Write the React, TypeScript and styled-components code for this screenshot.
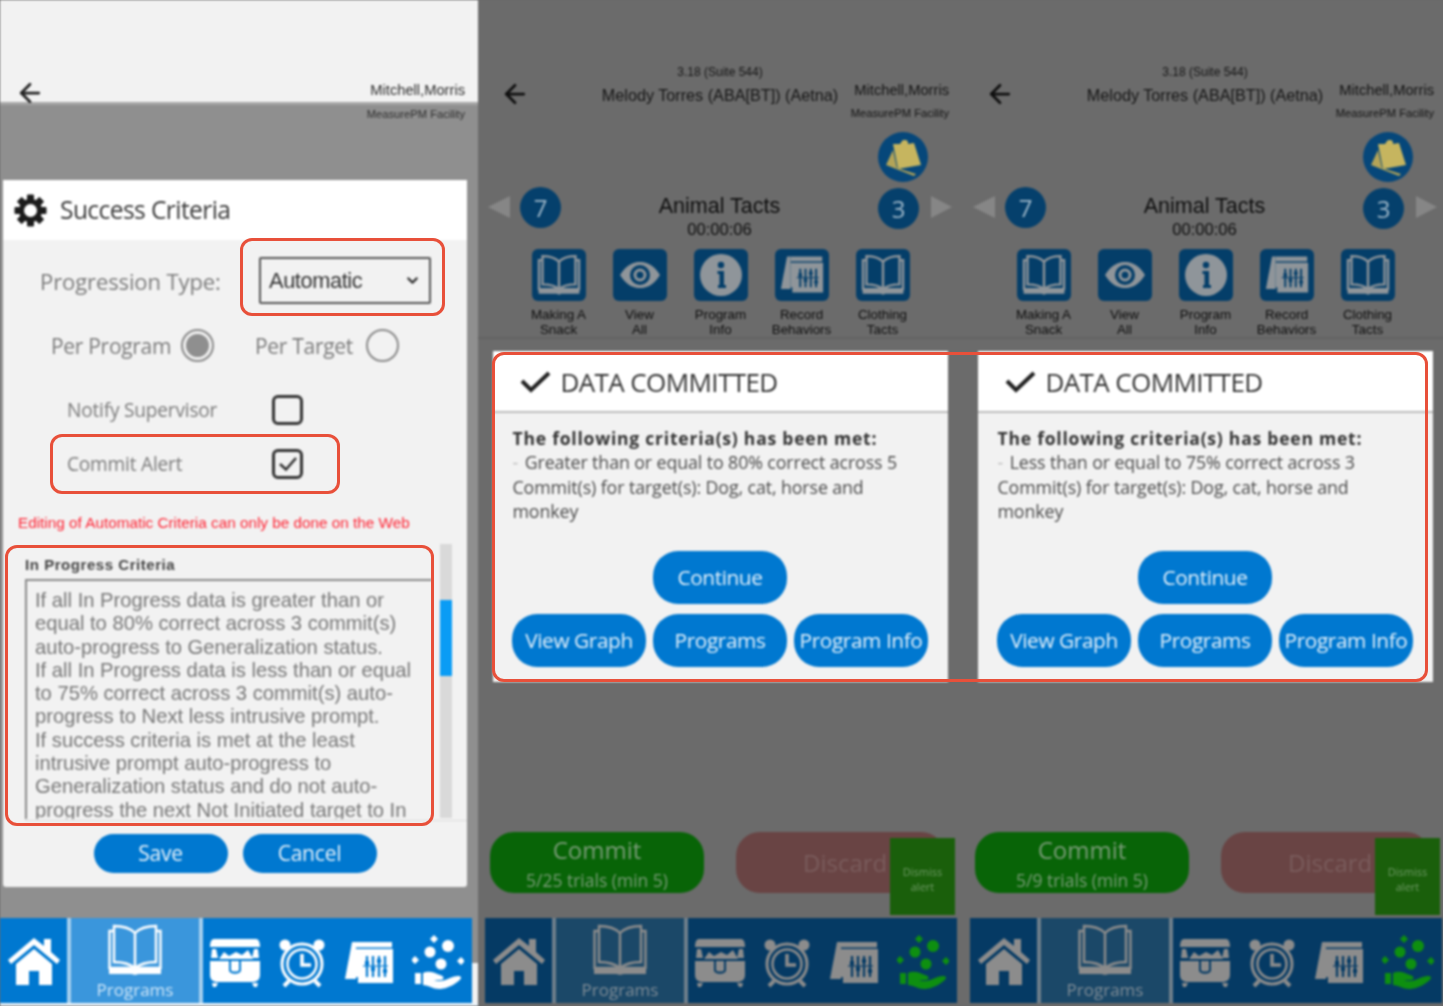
import React from "react";
import styled, { createGlobalStyle } from "styled-components";
import { ArrowLeft, ChevronDown } from "lucide-react";

const BLUE = "#0078d0";
const NAVY = "#053a64";
const SANS = `"Open Sans", "Noto Sans", sans-serif`;
const ARIAL = `"Liberation Sans", Arial, sans-serif`;

const Global = createGlobalStyle`
  html, body { margin: 0; padding: 0; background: #6b6b6b; overflow: hidden; }
  * { box-sizing: border-box; }
`;

const Stage = styled.div`
  position: relative;
  width: 1443px;
  height: 1006px;
  overflow: hidden;
`;
const Panels = styled.div`
  display: flex;
  width: 1448px;
  height: 1006px;
  filter: blur(0.85px);
`;

/* ---------- shared ---------- */
const UserName = styled.div`
  font: 14.7px/20px ${ARIAL};
  color: #2e2e2e;
  text-align: right;
  white-space: nowrap;
`;
const Facility = styled.div`
  font: 11.2px/18px ${ARIAL};
  color: #2e2e2e;
  text-align: right;
  white-space: nowrap;
`;

const NavBar = styled.div<{ $dim?: boolean }>`
  display: flex;
  gap: 4px;
  width: 472px;
  height: 85px;
  background: ${(p) => (p.$dim ? "#6f7f8b" : "#a6cfee")};
  flex-shrink: 0;
  position: relative;
  z-index: 2;
  --ink: ${(p) => (p.$dim ? NAVY : BLUE)};
  --panel: ${(p) => (p.$dim ? NAVY : BLUE)};
  --active: ${(p) => (p.$dim ? "#1b4868" : "#3a96dc")};
  --glyph: ${(p) => (p.$dim ? "#8c8c8c" : "#ffffff")};
  --label: ${(p) => (p.$dim ? "#7f8c96" : "#cfe6f8")};
  --coin: ${(p) => (p.$dim ? "#0e8f10" : "#ffffff")};
`;
const HomeCell = styled.div`
  width: 67px;
  background: var(--panel);
  display: flex;
  align-items: center;
  justify-content: center;
  color: var(--glyph);
`;
const ProgramsCell = styled.div`
  width: 128px;
  background: var(--active);
  display: flex;
  flex-direction: column;
  align-items: center;
  padding-top: 6px;
  color: var(--glyph);
`;
const NavLabel = styled.div`
  font: 17px/22px ${SANS};
  color: var(--label);
  margin-top: 3px;
`;
const ToolCell = styled.div`
  flex: 1;
  background: var(--panel);
  display: grid;
  grid-template-columns: repeat(4, 1fr);
  align-items: center;
  justify-items: center;
  padding-top: 5px;
  color: var(--glyph);
`;
const ToolShift = styled.div`
  display: flex;
  margin-left: -4px;
`;
const CoinSlot = styled.span`
  display: flex;
  color: var(--coin);
`;

const HomeIcon = () => (
  <svg width="56" height="52" viewBox="0 0 56 52" fill="currentColor">
    <path d="M2 25 L28 3 L38 11 V4 H45 V17 L54 25 L51 29 L28 10 L5 29 Z" />
    <path d="M10 29 L28 14 L46 29 V50 H33 V36 H23 V50 H10 Z" />
  </svg>
);
const BookIcon = ({ w = 56, h = 52, sw = 2.4 }: { w?: number; h?: number; sw?: number }) => (
  <svg width={w} height={h} viewBox="0 0 56 52" fill="none" stroke="currentColor" strokeWidth={sw}>
    <path d="M28 9 C23 4 15 2 7 2 V38 C15 38 23 40 28 44 C33 40 41 38 49 38 V2 C41 2 33 4 28 9 V44" />
    <path d="M7 7 H2.5 V44 H24" />
    <path d="M49 7 H53.5 V44 H32" />
    <path d="M2 43 H24 C26 43 27 45 28 45 C29 45 30 43 32 43 H54 V50 H32 C30 50 29 51 28 51 C27 51 26 50 24 50 H2 Z" fill="currentColor" stroke="none" />
  </svg>
);
const ChestIcon = () => (
  <svg width="52" height="50" viewBox="0 0 52 50" fill="currentColor">
    <path d="M5 1 H47 C50 1 51 5 51 9 H1 C1 5 2 1 5 1 Z" />
    <path d="M3 11 H7 L9 20 H2 Z M49 11 H45 L43 20 H50 Z" />
    <path d="M10 21 L15 14 L20 18 L27 14 L33 17 L39 12 L44 21 Z" />
    <path d="M1 23 H20 V32 C20 37 32 37 32 32 V23 H51 V37 C51 42 47 44 44 44 H8 C5 44 1 42 1 37 Z" />
    <path d="M22 23 H30 V32 C30 34 22 34 22 32 Z" />
    <path d="M3 45 H9 L7 49 H4 Z M43 45 H49 L48 49 H45 Z" />
  </svg>
);
const ClockIcon = () => (
  <svg width="48" height="50" viewBox="0 0 48 50" fill="none" stroke="currentColor">
    <circle cx="24" cy="26" r="20" strokeWidth="3" />
    <circle cx="24" cy="26" r="14.5" strokeWidth="2.5" />
    <path d="M24 16 V27 H33" strokeWidth="3.5" />
    <circle cx="7" cy="7" r="5.5" fill="currentColor" stroke="none" />
    <circle cx="41" cy="7" r="5.5" fill="currentColor" stroke="none" />
    <path d="M11 43 L6 48 M37 43 L42 48" strokeWidth="4" />
  </svg>
);
const CalendarIcon = ({ w = 50, h = 44 }: { w?: number; h?: number }) => (
  <svg width={w} height={h} viewBox="0 0 50 44" fill="currentColor">
    <path d="M8 1 H12 V38 H1 Z" />
    <rect x="12" y="1" width="36" height="5.5" />
    <path d="M12 8 H49 V42 H14 V36 L12 36 Z" />
    <g stroke="var(--ink)" strokeWidth="2.2">
      <path d="M19 25 H44" strokeWidth="1.2" />
      <path d="M23 15 V36 M29 15 V36 M35 15 V36 M41 15 V36" />
      <path d="M21 22 H25 M27 28 H31 M33 20 H37 M39 30 H43" strokeWidth="4" />
    </g>
  </svg>
);
const HandIcon = () => (
  <svg width="52" height="56" viewBox="0 0 52 56" fill="currentColor">
    <path d="M21 0 L25 4 L21 8 L17 4 Z M2 21 L6 25 L2 29 L-2 25 Z M48 22 L52 26 L48 30 L44 26 Z" transform="translate(1 0)" />
    <circle cx="36" cy="11" r="6" />
    <circle cx="18" cy="17" r="5.5" />
    <circle cx="29" cy="29" r="5.5" />
    <rect x="3" y="38" width="6" height="11" />
    <path d="M11 38 C17 35 23 38 28 40 C32 41 33 44 29 45 L22 45 C27 47 32 46 38 43 C43 41 49 40 49 43 C49 45 38 54 27 54 C21 54 16 50 11 50 Z" />
  </svg>
);
const GearIcon = () => (
  <svg width="33" height="33" viewBox="0 0 33 33" fill="currentColor">
    {[0, 45, 90, 135, 180, 225, 270, 315].map((a) => (
      <rect key={a} x="13" y="0.5" width="7" height="7" rx="1" transform={`rotate(${a} 16.5 16.5)`} />
    ))}
    <circle cx="16.5" cy="16.5" r="9" fill="none" stroke="currentColor" strokeWidth="5" />
  </svg>
);

const Nav = ({ dim }: { dim?: boolean }) => (
  <NavBar $dim={dim}>
    <HomeCell>
      <HomeIcon />
    </HomeCell>
    <ProgramsCell>
      <BookIcon />
      <NavLabel>Programs</NavLabel>
    </ProgramsCell>
    <ToolCell>
      <ToolShift>
        <ChestIcon />
      </ToolShift>
      <ToolShift>
        <ClockIcon />
      </ToolShift>
      <ToolShift>
        <CalendarIcon />
      </ToolShift>
      <CoinSlot>
        <HandIcon />
      </CoinSlot>
    </ToolCell>
  </NavBar>
);

/* ---------- panel 1 ---------- */
const FirstPanel = styled.div`
  width: 478px;
  height: 1006px;
  flex-shrink: 0;
  display: flex;
  flex-direction: column;
  background: #8f8f8f;
`;
const TopBand = styled.div`
  height: 105px;
  flex-shrink: 0;
  background: #f2f2f2;
  border-bottom: 3px solid #a5a5a5;
  display: flex;
  align-items: flex-end;
  justify-content: space-between;
  padding: 0 13px 0 15px;
  color: #222;
  svg { margin-bottom: -6px; }
`;
const TopName = styled(UserName)`
  margin-bottom: 2px;
`;
const FacilityBar = styled.div`
  height: 18px;
  padding-right: 13px;
  margin-bottom: 57px;
`;
const Card = styled.div`
  width: 464px;
  height: 707px;
  margin-left: 3px;
  margin-bottom: 31px;
  background: #f2f2f2;
  border-radius: 3px;
  flex-shrink: 0;
`;
const CardTitleBar = styled.div`
  height: 60px;
  background: #fff;
  display: flex;
  align-items: center;
  padding-left: 11px;
  gap: 13px;
  color: #1c1c1c;
`;
const CardTitle = styled.div`
  font: 24.6px/30px ${SANS};
  color: #3a3a3a;
  letter-spacing: -0.6px;
`;
const TypeRow = styled.div`
  display: flex;
  align-items: center;
  height: 47px;
  margin-top: 17px;
  padding-left: 37px;
`;
const FieldLabel = styled.div`
  width: 219px;
  font: 22px/28px ${SANS};
  color: #7a7a7a;
  letter-spacing: -0.1px;
  white-space: nowrap;
`;
const SelectBox = styled.div`
  width: 172px;
  height: 47px;
  border: 2px solid #555;
  border-radius: 2px;
  display: flex;
  align-items: center;
  justify-content: space-between;
  padding: 0 8px;
  font: 21.8px/24px ${ARIAL};
  color: #333;
  letter-spacing: -0.4px;
`;
const RadioRow = styled.div`
  display: grid;
  grid-template-columns: 130px 33px 41px 111px 33px;
  align-items: center;
  margin-top: 25px;
  padding-left: 48px;
`;
const OptionText = styled.div`
  font: 21px/28px ${SANS};
  color: #7a7a7a;
  letter-spacing: -0.3px;
  white-space: nowrap;
`;
const Radio = styled.div<{ $on?: boolean }>`
  width: 33px;
  height: 33px;
  border-radius: 50%;
  border: 2px solid #8a8a8a;
  background: #f2f2f2;
  display: flex;
  align-items: center;
  justify-content: center;
  &::after {
    content: "";
    width: 23px;
    height: 23px;
    border-radius: 50%;
    background: ${(p) => (p.$on ? "#8f8f8f" : "transparent")};
  }
`;
const CheckRow = styled.div<{ $top: number }>`
  display: grid;
  grid-template-columns: 205px 30px;
  align-items: center;
  height: 30px;
  margin-top: ${(p) => p.$top}px;
  padding-left: 64px;
`;
const CheckLabel = styled.div`
  font: 19.1px/24px ${SANS};
  color: #7a7a7a;
  letter-spacing: -0.2px;
  white-space: nowrap;
`;
const CheckBox = styled.div`
  width: 31px;
  height: 30px;
  border: 3px solid #333;
  border-radius: 6px;
  display: flex;
  align-items: center;
  justify-content: center;
  color: #333;
`;
const Warning = styled.div`
  margin-top: 35px;
  padding-left: 15px;
  font: 15.3px/18px ${ARIAL};
  color: #ff2535;
  white-space: nowrap;
`;
const CriteriaSection = styled.div`
  display: flex;
  gap: 8px;
  height: 275px;
  margin-top: 12px;
  padding-left: 22px;
`;
const CriteriaColumn = styled.div`
  width: 407px;
  padding-top: 12px;
  display: flex;
  flex-direction: column;
`;
const CriteriaLabel = styled.div`
  font: bold 15px/18px ${ARIAL};
  color: #444;
  height: 23px;
  letter-spacing: 0.55px;
  white-space: nowrap;
`;
const CriteriaBox = styled.div`
  height: 240px;
  border-top: 2px solid #8a8a8a;
  border-left: 2px solid #8a8a8a;
  padding: 8px 0 0 8px;
  overflow: hidden;
  font: 20.2px/23.3px ${ARIAL};
  color: #777;
  white-space: pre-line;
`;
const Track = styled.div`
  width: 12px;
  height: 274px;
  background: #d9d9d9;
  padding-top: 56px;
`;
const Thumb = styled.div`
  height: 76px;
  background: #0a9cf5;
`;
const CardRule = styled.div`
  height: 1px;
  margin: 1px 0 0 22px;
  background: #dcdcdc;
`;
const CardButtons = styled.div`
  display: flex;
  justify-content: center;
  gap: 15px;
  margin-top: 13px;
`;
const SmallPill = styled.div`
  width: 134px;
  height: 39px;
  border-radius: 20px;
  background: ${BLUE};
  color: #e8f3fb;
  font: 21px/38px ${SANS};
  text-align: center;
  letter-spacing: -0.2px;
`;
const NavRow = styled.div`
  display: flex;
  align-items: flex-end;
  height: 85px;
  flex-shrink: 0;
`;
const EdgePiece = styled.div`
  flex: 1;
  height: 40px;
  background: #f2f2f2;
`;
const BottomStrip = styled.div`
  height: 3px;
  background: #e8f1f8;
`;

/* ---------- panels 2 and 3 ---------- */
const DimPanel = styled.div`
  position: relative;
  width: 485px;
  height: 1006px;
  flex-shrink: 0;
  background: #f2f2f2;
  display: flex;
  flex-direction: column;
`;
const Scrim = styled.div`
  position: absolute;
  inset: 0;
  background: rgba(0, 0, 0, 0.558);
  z-index: 1;
`;
const Header = styled.div`
  display: grid;
  grid-template-columns: 100px 284px 87px;
  height: 122px;
  padding-top: 62px;
  color: #222;
`;
const BackSlot = styled.div`
  padding: 17px 0 0 22px;
`;
const HeaderMiddle = styled.div`
  text-align: center;
`;
const VersionText = styled.div`
  font: 12px/20px ${ARIAL};
  color: #333;
`;
const PatientName = styled.div`
  font: 16.2px/20px ${ARIAL};
  color: #333;
  margin-top: 3px;
  white-space: nowrap;
`;
const HeaderRight = styled.div`
  padding-top: 18px;
  display: flex;
  flex-direction: column;
  align-items: flex-end;
`;
const HeaderFacility = styled(Facility)`
  margin-top: 4px;
`;
const NoteRow = styled.div`
  display: flex;
  justify-content: flex-end;
  padding-right: 35px;
  margin-top: 10px;
  position: relative;
  z-index: 2;
`;
const NoteButton = styled.div`
  width: 50px;
  height: 50px;
  border-radius: 50%;
  background: #06477a;
  display: flex;
  align-items: center;
  justify-content: center;
`;
const ProgramRow = styled.div`
  display: flex;
  align-items: flex-start;
  height: 63px;
  margin-top: 4px;
  padding: 0 11px 0 10px;
`;
const Tri = styled.div<{ $right?: boolean }>`
  width: 0;
  height: 0;
  margin-top: 10px;
  position: relative;
  z-index: 2;
  border-top: 11px solid transparent;
  border-bottom: 11px solid transparent;
  ${(p) =>
    p.$right
      ? "border-left: 21px solid #868686; margin-left: 12px;"
      : "border-right: 22px solid #868686; margin-right: 10px;"}
`;
const CountBadge = styled.div<{ $down?: boolean }>`
  width: 41px;
  height: 41px;
  margin-top: ${(p) => (p.$down ? 2 : 1)}px;
  border-radius: 50%;
  background: #05406c;
  color: #9db6c8;
  font: 24px/41px ${SANS};
  text-align: center;
  flex-shrink: 0;
  position: relative;
  z-index: 2;
`;
const ProgramCenter = styled.div`
  flex: 1;
  text-align: center;
`;
const ProgramName = styled.div`
  font: 21.5px/28px ${ARIAL};
  color: #222;
  margin-top: 6px;
`;
const Timer = styled.div`
  font: 16.6px/18px ${ARIAL};
  color: #222;
  margin-top: 1px;
`;
const TileRow = styled.div`
  display: flex;
  padding-left: 40px;
  height: 90px;
  border-bottom: 2px solid #dedede;
`;
const TileCol = styled.div`
  width: 81px;
  display: flex;
  flex-direction: column;
  align-items: center;
`;
const Tile = styled.div`
  width: 54px;
  height: 54px;
  border-radius: 6px;
  background: #043e69;
  color: #8f959a;
  --ink: #043e69;
  display: flex;
  align-items: center;
  justify-content: center;
  position: relative;
  z-index: 2;
`;
const TileText = styled.div`
  font: 13.4px/15px ${ARIAL};
  color: #222;
  text-align: center;
  margin-top: 6px;
  white-space: pre-line;
`;
const Spacer = styled.div`
  flex: 1;
`;
const ActionRow = styled.div`
  display: flex;
  gap: 32px;
  padding-left: 12px;
  height: 61px;
  margin-bottom: 25px;
  position: relative;
  z-index: 2;
`;
const CommitButton = styled.div`
  width: 214px;
  border-radius: 24px;
  background: #086407;
  color: #7a9c78;
  text-align: center;
  padding-top: 2px;
`;
const CommitTitle = styled.div`
  font: 24px/32px ${SANS};
`;
const CommitSub = styled.div`
  font: 17.5px/24px ${SANS};
  margin-top: 2px;
`;
const DiscardButton = styled.div`
  width: 209px;
  border-radius: 24px;
  background: #694444;
  color: #7a5c5c;
  font: 24px/61px ${SANS};
  padding-left: 67px;
`;
const Dismiss = styled.div`
  position: absolute;
  left: 412px;
  top: 838px;
  width: 65px;
  height: 77px;
  background: #1a5f0b;
  color: #6f9a66;
  z-index: 3;
  font: 11px/15px ${SANS};
  text-align: center;
  padding-top: 26px;
`;
const NavSlot = styled.div`
  padding-left: 7px;
  height: 88px;
`;
const Alert = styled.div`
  position: absolute;
  left: 14.5px;
  top: 351px;
  width: 455px;
  height: 331px;
  background: #f2f2f2;
  z-index: 3;
`;
const AlertHead = styled.div`
  height: 62px;
  background: #fff;
  border-bottom: 2px solid #bdbdbd;
  display: flex;
  align-items: center;
  gap: 10px;
  padding: 1px 0 0 27px;
  color: #222;
`;
const AlertTitle = styled.div`
  font: 26px/32px ${SANS};
  color: #333;
  letter-spacing: -0.6px;
`;
const AlertBody = styled.div`
  padding: 13px 0 0 20px;
  height: 109px;
`;
const AlertLead = styled.div`
  font: 700 17.5px/24.3px ${SANS};
  color: #333;
  letter-spacing: 0.78px;
  white-space: nowrap;
`;
const AlertLine = styled.div`
  font: 17.8px/24.3px ${SANS};
  color: #4a4a4a;
  letter-spacing: -0.1px;
  white-space: nowrap;
`;
const Dash = styled.span`
  color: #bbb;
  margin-right: 2px;
`;
const ButtonStack = styled.div`
  display: flex;
  flex-direction: column;
  align-items: center;
  gap: 10px;
  margin-top: 29px;
`;
const ButtonRow = styled.div`
  display: flex;
  gap: 7px;
`;
const Pill = styled.div`
  width: 134px;
  height: 53px;
  border-radius: 25px;
  background: ${BLUE};
  color: #e4f1fb;
  font: 20.8px/53px ${SANS};
  text-align: center;
  letter-spacing: -0.4px;
  white-space: nowrap;
`;

/* ---------- annotations ---------- */
const Mark = styled.div<{ $x: number; $y: number; $w: number; $h: number }>`
  position: absolute;
  left: ${(p) => p.$x}px;
  top: ${(p) => p.$y}px;
  width: ${(p) => p.$w}px;
  height: ${(p) => p.$h}px;
  border: 3.5px solid #e8503a;
  border-radius: 12px;
  z-index: 5;
`;

const NoteIcon = () => (
  <svg width="38" height="38" viewBox="0 0 38 38" fill="#c6b55f">
    <path d="M2 27 L9 12 L13 30 L32 36 L30 38 Z" fill="#b3a458" />
    <path d="M9 6 L16 6 L18 3 C20 1 23 2 24 6 L30 5 L37 27 L14 31 Z" />
    <circle cx="21" cy="5" r="3" fill="#c6b55f" />
  </svg>
);
const EyeIcon = () => (
  <svg width="42" height="28" viewBox="0 0 42 28">
    <path d="M1 14 C8 3 15 1 21 1 C27 1 34 3 41 14 C34 25 27 27 21 27 C15 27 8 25 1 14 Z" fill="currentColor" />
    <circle cx="21" cy="14" r="10" fill="var(--ink)" />
    <circle cx="21" cy="14" r="6.5" fill="currentColor" />
    <circle cx="21" cy="14" r="3.5" fill="var(--ink)" />
  </svg>
);
const InfoIcon = () => (
  <svg width="44" height="44" viewBox="0 0 44 44">
    <circle cx="22" cy="22" r="21" fill="currentColor" />
    <circle cx="22" cy="12" r="3.2" fill="var(--ink)" />
    <path d="M18.5 18 H25 V32 H27 V35 H19 V32 H20.5 V21 H18.5 Z" fill="var(--ink)" />
  </svg>
);
const TinyCheck = () => (
  <svg width="20" height="16" viewBox="0 0 20 16" fill="none" stroke="currentColor" strokeWidth="2.6">
    <path d="M2 8 L8 13.5 L18 2" />
  </svg>
);
const BigCheck = () => (
  <svg width="31" height="22" viewBox="0 0 31 22" fill="none" stroke="currentColor" strokeWidth="4">
    <path d="M2 10 L11 19 L29 2" />
  </svg>
);

const criteria = `If all In Progress data is greater than or
equal to 80% correct across 3 commit(s)
auto-progress to Generalization status.
If all In Progress data is less than or equal
to 75% correct across 3 commit(s) auto-
progress to Next less intrusive prompt.
If success criteria is met at the least
intrusive prompt auto-progress to
Generalization status and do not auto-
progress the next Not Initiated target to In`;

const First = () => (
  <FirstPanel>
    <TopBand>
      <ArrowLeft size={30} strokeWidth={2.2} />
      <TopName>Mitchell,Morris</TopName>
    </TopBand>
    <FacilityBar>
      <Facility>MeasurePM Facility</Facility>
    </FacilityBar>
    <Card>
      <CardTitleBar>
        <GearIcon />
        <CardTitle>Success Criteria</CardTitle>
      </CardTitleBar>
      <TypeRow>
        <FieldLabel>Progression Type:</FieldLabel>
        <SelectBox>
          Automatic
          <ChevronDown size={17} strokeWidth={3} />
        </SelectBox>
      </TypeRow>
      <RadioRow>
        <OptionText>Per Program</OptionText>
        <Radio $on />
        <span />
        <OptionText>Per Target</OptionText>
        <Radio />
      </RadioRow>
      <CheckRow $top={33}>
        <CheckLabel>Notify Supervisor</CheckLabel>
        <CheckBox />
      </CheckRow>
      <CheckRow $top={24}>
        <CheckLabel>Commit Alert</CheckLabel>
        <CheckBox>
          <TinyCheck />
        </CheckBox>
      </CheckRow>
      <Warning>Editing of Automatic Criteria can only be done on the Web</Warning>
      <CriteriaSection>
        <CriteriaColumn>
          <CriteriaLabel>In Progress Criteria</CriteriaLabel>
          <CriteriaBox>{criteria}</CriteriaBox>
        </CriteriaColumn>
        <Track>
          <Thumb />
        </Track>
      </CriteriaSection>
      <CardRule />
      <CardButtons>
        <SmallPill>Save</SmallPill>
        <SmallPill>Cancel</SmallPill>
      </CardButtons>
    </Card>
    <NavRow>
      <Nav />
      <EdgePiece />
    </NavRow>
    <BottomStrip />
  </FirstPanel>
);

const Session = ({ rule, trials }: { rule: string; trials: string }) => (
  <DimPanel>
    <Header>
      <BackSlot>
        <ArrowLeft size={30} strokeWidth={2.2} />
      </BackSlot>
      <HeaderMiddle>
        <VersionText>3.18 (Suite 544)</VersionText>
        <PatientName>Melody Torres (ABA[BT]) (Aetna)</PatientName>
      </HeaderMiddle>
      <HeaderRight>
        <UserName>Mitchell,Morris</UserName>
        <HeaderFacility>MeasurePM Facility</HeaderFacility>
      </HeaderRight>
    </Header>
    <NoteRow>
      <NoteButton>
        <NoteIcon />
      </NoteButton>
    </NoteRow>
    <ProgramRow>
      <Tri />
      <CountBadge>7</CountBadge>
      <ProgramCenter>
        <ProgramName>Animal Tacts</ProgramName>
        <Timer>00:00:06</Timer>
      </ProgramCenter>
      <CountBadge $down>3</CountBadge>
      <Tri $right />
    </ProgramRow>
    <TileRow>
      <TileCol>
        <Tile>
          <BookIcon w={44} h={42} sw={3} />
        </Tile>
        <TileText>{"Making A\nSnack"}</TileText>
      </TileCol>
      <TileCol>
        <Tile>
          <EyeIcon />
        </Tile>
        <TileText>{"View\nAll"}</TileText>
      </TileCol>
      <TileCol>
        <Tile>
          <InfoIcon />
        </Tile>
        <TileText>{"Program\nInfo"}</TileText>
      </TileCol>
      <TileCol>
        <Tile>
          <CalendarIcon w={44} h={44} />
        </Tile>
        <TileText>{"Record\nBehaviors"}</TileText>
      </TileCol>
      <TileCol>
        <Tile>
          <BookIcon w={44} h={42} sw={3} />
        </Tile>
        <TileText>{"Clothing\nTacts"}</TileText>
      </TileCol>
    </TileRow>
    <Spacer />
    <ActionRow>
      <CommitButton>
        <CommitTitle>Commit</CommitTitle>
        <CommitSub>{trials}</CommitSub>
      </CommitButton>
      <DiscardButton>Discard</DiscardButton>
    </ActionRow>
    <NavSlot>
      <Nav dim />
    </NavSlot>
    <Scrim />
    <Dismiss>
      Dismiss
      <br />
      alert
    </Dismiss>
    <Alert>
      <AlertHead>
        <BigCheck />
        <AlertTitle>DATA COMMITTED</AlertTitle>
      </AlertHead>
      <AlertBody>
        <AlertLead>The following criteria(s) has been met:</AlertLead>
        <AlertLine>
          <Dash>-</Dash> {rule}
        </AlertLine>
        <AlertLine>Commit(s) for target(s): Dog, cat, horse and</AlertLine>
        <AlertLine>monkey</AlertLine>
      </AlertBody>
      <ButtonStack>
        <Pill>Continue</Pill>
        <ButtonRow>
          <Pill>View Graph</Pill>
          <Pill>Programs</Pill>
          <Pill>Program Info</Pill>
        </ButtonRow>
      </ButtonStack>
    </Alert>
  </DimPanel>
);

export default function App() {
  return (
    <Stage>
      <Global />
      <Panels>
        <First />
        <Session trials="5/25 trials (min 5)" rule="Greater than or equal to 80% correct across 5" />
        <Session trials="5/9 trials (min 5)" rule="Less than or equal to 75% correct across 3" />
      </Panels>
      <Mark $x={240} $y={238} $w={205} $h={78} />
      <Mark $x={50} $y={434} $w={290} $h={60} />
      <Mark $x={5} $y={545} $w={429} $h={281} />
      <Mark $x={492} $y={352} $w={936} $h={330} />
    </Stage>
  );
}
